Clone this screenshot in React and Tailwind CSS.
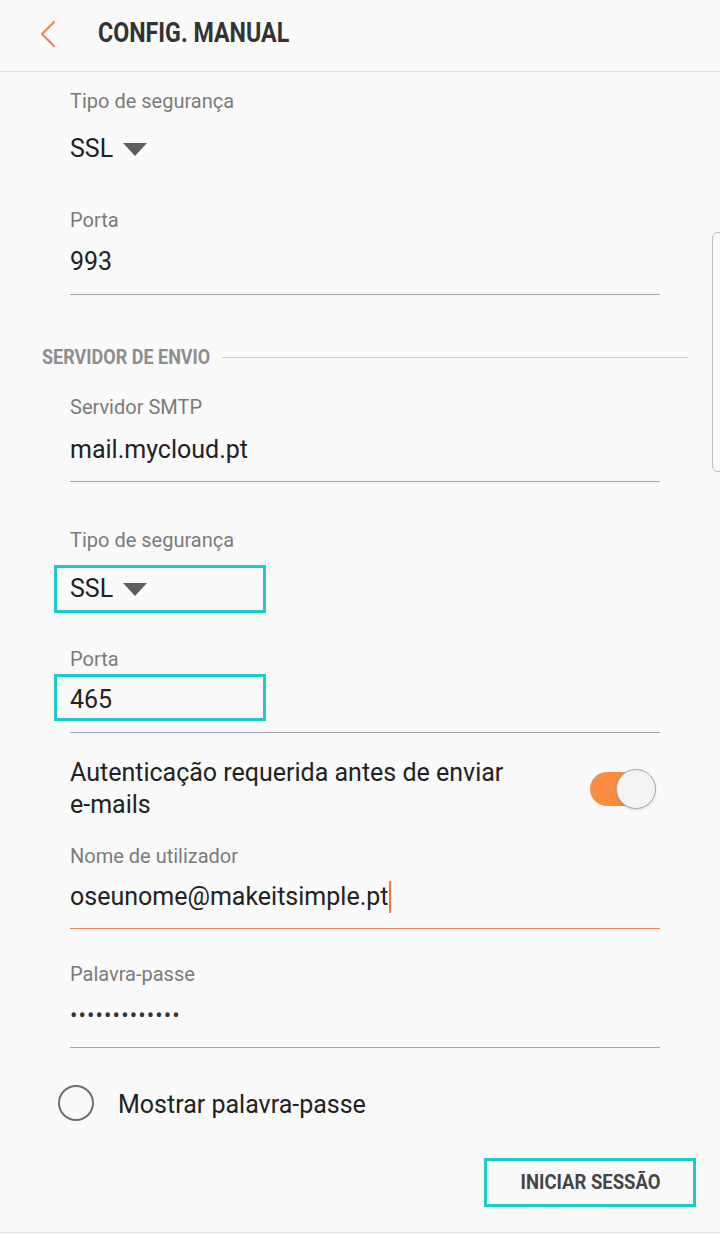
import React from "react";

const font = { fontFamily: "Roboto, 'Noto Sans', Arial, sans-serif" };

function Label({ children, className = "" }) {
  return (
    <div className={"pl-[70px] text-[20px] leading-[24px] text-[#7b7b7b] " + className}>{children}</div>
  );
}

function Underline({ className = "", color = "bg-[#a6a6a6]" }) {
  return <div className={"ml-[70px] mr-[60px] h-px " + color + " " + className} />;
}

function Triangle() {
  return (
    <svg width="24" height="13" viewBox="0 0 24 13" className="ml-[10px]">
      <polygon points="0,0 24,0 12,13" fill="#5f5f5f" />
    </svg>
  );
}

export default function App() {
  return (
    <div className="relative w-[720px] h-[1234px] overflow-hidden bg-[#fafafa] text-[#222222]" style={font}>
      {/* Header */}
      <div className="h-[72px] flex items-center border-b border-[#e2e2e2]">
        <svg width="20" height="30" viewBox="0 0 20 30" className="ml-[38px] -mt-[4px]">
          <polyline points="16,3 4,15 16,27" fill="none" stroke="#f2895a" strokeWidth="2.4" strokeLinecap="round" strokeLinejoin="round" />
        </svg>
        <div className="ml-[40px] -mt-[4px] inline-block origin-left scale-x-[0.86] text-[27px] font-bold leading-none text-[#333333] whitespace-nowrap">
          CONFIG. MANUAL
        </div>
      </div>

      {/* Receiving security */}
      <Label className="mt-[17px]">Tipo de segurança</Label>
      <div className="pl-[70px] mt-[20px] h-[32px] flex items-center text-[25px]">
        SSL <Triangle />
      </div>
      <Label className="mt-[43px]">Porta</Label>
      <div className="pl-[70px] mt-[14px] h-[32px] flex items-center text-[25px]">993</div>
      <Underline className="mt-[16px]" />

      {/* Section header */}
      <div className="mt-[50px] flex items-center h-[24px] pl-[42px] pr-[32px]">
        <div className="inline-block w-[170px] origin-left scale-x-[0.9] text-[20px] font-bold text-[#8e8e8e] whitespace-nowrap leading-none">
          SERVIDOR DE ENVIO
        </div>
        <div className="flex-1 h-px bg-[#cfcfcf] ml-[10px]" />
      </div>

      <Label className="mt-[26px]">Servidor SMTP</Label>
      <div className="pl-[70px] mt-[15px] h-[32px] flex items-center text-[25px]">mail.mycloud.pt</div>
      <Underline className="mt-[15px]" />

      <Label className="mt-[46px]">Tipo de segurança</Label>
      <div className="ml-[54px] mt-[13px] w-[212px] h-[48px] border-[3px] border-[#1ccccc] flex items-center pl-[13px] text-[25px]">
        SSL <Triangle />
      </div>
      <Label className="mt-[34px]">Porta</Label>
      <div className="ml-[54px] mt-[3px] w-[212px] h-[47px] border-[3px] border-[#1ccccc] flex items-center pl-[13px] pt-[4px] text-[25px]">
        465
      </div>
      <Underline className="mt-[11px]" />

      {/* Auth toggle */}
      <div className="mt-[24px] pl-[70px] pr-[64px] flex items-start justify-between">
        <div className="text-[25px] leading-[32px]">
          Autenticação requerida antes de enviar
          <br />
          e-mails
        </div>
        <div className="relative w-[66px] h-[40px] mt-[12px]">
          <div className="absolute left-0 top-[3px] w-[56px] h-[34px] rounded-full bg-[#fb8c40]" />
          <div className="absolute right-0 top-0 w-[40px] h-[40px] rounded-full bg-[#f4f4f4] border border-[#a8a8a8] shadow-sm" />
        </div>
      </div>

      <Label className="mt-[23px]">Nome de utilizador</Label>
      <div className="pl-[70px] mt-[13px] h-[32px] flex items-center text-[25px]">
        oseunome@makeitsimple.pt
        <span className="inline-block w-[2px] h-[32px] bg-[#f07a3c] ml-[1px]" />
      </div>
      <Underline className="mt-[15px]" color="bg-[#f0875a] h-[2px]" />

      <Label className="mt-[33px]">Palavra-passe</Label>
      <div className="pl-[70px] mt-[13px] h-[32px] flex items-center text-[22px] tracking-[1.1px] text-[#333]">
        •••••••••••••
      </div>
      <Underline className="mt-[16px]" />

      {/* Show password */}
      <div className="mt-[35px] h-[40px] flex items-center pl-[58px]">
        <div className="w-[36px] h-[36px] rounded-full border-[2px] border-[#707070]" />
        <div className="ml-[24px] pt-[4px] text-[25px]">Mostrar palavra-passe</div>
      </div>

      {/* Button */}
      <div className="mt-[35px] flex justify-end pr-[24px]">
        <div className="w-[212px] h-[49px] border-[3px] border-[#1ccccc] flex items-center justify-center">
          <div className="inline-block scale-x-[0.88] text-[21px] font-bold text-[#454545] whitespace-nowrap leading-none">
            INICIAR SESSÃO
          </div>
        </div>
      </div>

      <div className="absolute left-0 right-0 top-[1232px] h-px bg-[#dedede]" />

      {/* Scrollbar */}
      <div className="absolute left-[712px] top-[232px] w-[14px] h-[240px] rounded-[6px] border border-[#bdbdbd]" />
    </div>
  );
}
